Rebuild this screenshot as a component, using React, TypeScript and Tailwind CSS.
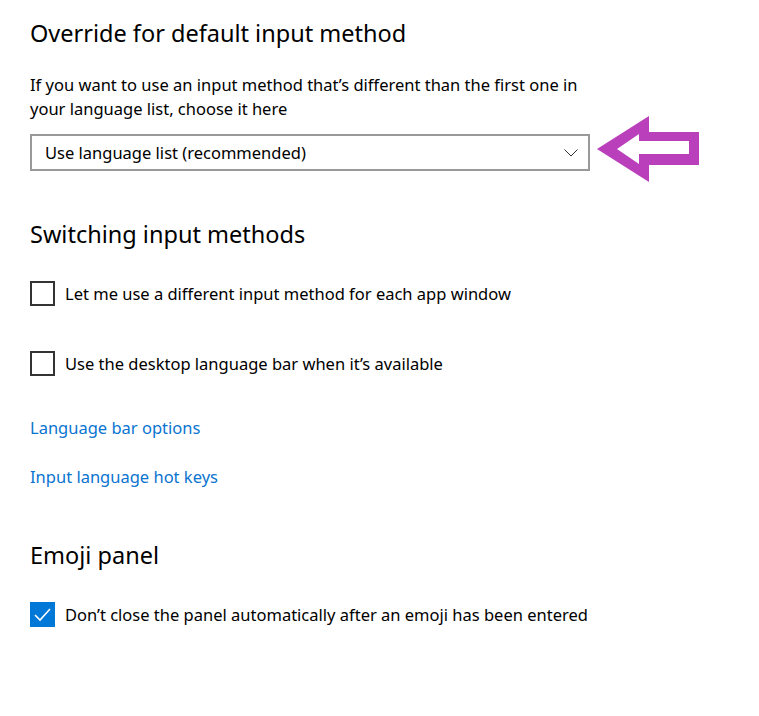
import { useState } from 'react';

function Checkbox({ checked, onToggle, label }: { checked: boolean; onToggle: () => void; label: string }) {
  return (
    <label className="flex items-center cursor-pointer select-none" onClick={onToggle}>
      <span
        className={`w-[25px] h-[25px] shrink-0 flex items-center justify-center ${
          checked ? 'bg-[#0078d7]' : 'border-2 border-[#333333] bg-white'
        }`}
      >
        {checked && (
          <svg width="19" height="19" viewBox="0 0 19 19" fill="none">
            <path d="M2 10 L7 15 L17 4" stroke="white" strokeWidth="1.6" />
          </svg>
        )}
      </span>
      <span className="ml-[10px] text-[16.5px] leading-[24px] text-black">{label}</span>
    </label>
  );
}

export default function App() {
  const [perApp, setPerApp] = useState(false);
  const [langBar, setLangBar] = useState(false);
  const [keepOpen, setKeepOpen] = useState(true);

  return (
    <div className="w-[759px] h-[716px] bg-white pl-[30px] pt-[17px] font-['Noto_Sans',sans-serif] text-black">
      <h2 className="text-[23.5px] leading-[32px] font-normal">Override for default input method</h2>

      <p className="mt-[24px] text-[16.5px] leading-[24px] w-[585px]">
        If you want to use an input method that’s different than the first one in your language list, choose it here
      </p>

      <div className="mt-[13px] flex items-center">
        <div className="w-[560px] h-[37px] border-2 border-[#999999] flex items-center justify-between pl-[13px] pr-[10px]">
          <span className="text-[16.5px] leading-[24px]">Use language list (recommended)</span>
          <svg width="14" height="8" viewBox="0 0 14 8" fill="none">
            <path d="M0.5 0.5 L7 7 L13.5 0.5" stroke="#333333" strokeWidth="1" />
          </svg>
        </div>
        <svg width="104" height="68" viewBox="0 0 104 68" className="ml-[7px] -mt-[18px] -mb-[13px]">
          <path
            fillRule="evenodd"
            fill="#b93fbb"
            d="M0 33 L52 0 L52 16 L102 16 L102 49 L52 49 L52 66 Z M20 33 L42 18 L42 25 L92 25 L92 38 L42 38 L42 48 Z"
          />
        </svg>
      </div>

      <h2 className="mt-[47px] text-[23.5px] leading-[32px] font-normal">Switching input methods</h2>

      <div className="mt-[31px]">
        <Checkbox checked={perApp} onToggle={() => setPerApp(!perApp)} label="Let me use a different input method for each app window" />
      </div>
      <div className="mt-[45px]">
        <Checkbox checked={langBar} onToggle={() => setLangBar(!langBar)} label="Use the desktop language bar when it’s available" />
      </div>

      <div className="mt-[40px]">
        <a href="#" className="text-[16.5px] leading-[24px] text-[#0a74d0]">Language bar options</a>
      </div>
      <div className="mt-[25px]">
        <a href="#" className="text-[16.5px] leading-[24px] text-[#0a74d0]">Input language hot keys</a>
      </div>

      <h2 className="mt-[50px] text-[23.5px] leading-[32px] font-normal">Emoji panel</h2>

      <div className="mt-[31px]">
        <Checkbox checked={keepOpen} onToggle={() => setKeepOpen(!keepOpen)} label="Don’t close the panel automatically after an emoji has been entered" />
      </div>
    </div>
  );
}
